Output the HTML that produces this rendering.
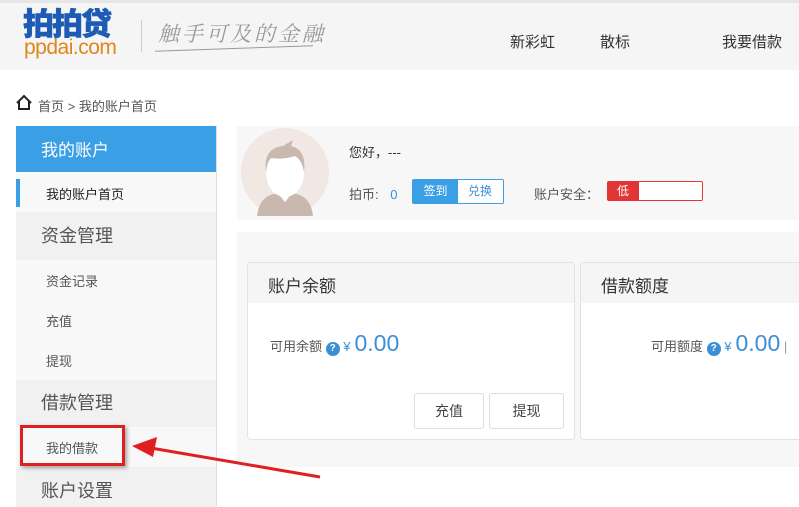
<!DOCTYPE html>
<html><head><meta charset="utf-8"><style>
*{margin:0;padding:0;box-sizing:border-box}
body{width:799px;height:506px;overflow:hidden;background:#fff;font-family:"Liberation Sans","Noto Sans CJK SC",sans-serif;position:relative;color:#333}
.a{position:absolute}
</style></head><body>
<div class="a" style="left:0;top:0;width:799px;height:70px;background:#f5f5f5;border-top:3px solid #e6e6e6"></div>
<div class="a" style="left:23px;top:9px;font-size:31px;font-weight:900;color:#1d5bb5;letter-spacing:-2px;line-height:32px;-webkit-text-stroke:0.5px #1d5bb5">拍拍贷</div>
<div class="a" style="left:24px;top:37px;font-size:21px;color:#e0861a;line-height:22px;letter-spacing:-0.5px">ppdai.com</div>
<div class="a" style="left:141px;top:20px;width:1px;height:32px;background:#ccc"></div>
<div class="a" style="left:158px;top:18px;font-size:21px;color:#999;font-style:italic;letter-spacing:3px;font-family:'Noto Serif CJK SC',serif">触手可及的金融</div>
<div class="a" style="left:155px;top:48px;width:158px;height:1px;background:#999;transform:rotate(-2deg)"></div>
<div class="a" style="left:510px;top:31px;font-size:15px;color:#333">新彩虹</div>
<div class="a" style="left:600px;top:31px;font-size:15px;color:#333">散标</div>
<div class="a" style="left:722px;top:31px;font-size:15px;color:#333">我要借款</div>
<svg class="a" style="left:15px;top:94px" width="18" height="17" viewBox="0 0 18 17"><path d="M2 9 L9 2 L16 9 M4 7 V15 H14 V7" fill="none" stroke="#222" stroke-width="2"/></svg>
<div class="a" style="left:38px;top:96px;font-size:13px;color:#555">首页 &gt; 我的账户首页</div>
<!-- sidebar -->
<div class="a" style="left:16px;top:126px;width:201px;height:380px;border-right:1px solid #ddd;background:#f8f8f8"></div>
<div class="a" style="left:16px;top:126px;width:200px;height:46px;background:#3b9fe6;color:#fff;font-size:17px;padding:10px 0 0 25px">我的账户</div>
<div class="a" style="left:16px;top:179px;width:4px;height:28px;background:#3b9fe6"></div>
<div class="a" style="left:46px;top:184px;font-size:13px;color:#222">我的账户首页</div>
<div class="a" style="left:16px;top:212px;width:200px;height:48px;background:#f1f1f1;font-size:18px;color:#555;padding:10px 0 0 25px">资金管理</div>
<div class="a" style="left:46px;top:271px;font-size:13px;color:#555">资金记录</div>
<div class="a" style="left:46px;top:311px;font-size:13px;color:#555">充值</div>
<div class="a" style="left:46px;top:351px;font-size:13px;color:#555">提现</div>
<div class="a" style="left:16px;top:380px;width:200px;height:47px;background:#f1f1f1;font-size:18px;color:#555;padding:9px 0 0 25px">借款管理</div>
<div class="a" style="left:46px;top:438px;font-size:13px;color:#555">我的借款</div>
<div class="a" style="left:16px;top:467px;width:200px;height:40px;background:#f1f1f1;font-size:18px;color:#555;padding:10px 0 0 25px">账户设置</div>
<!-- profile -->
<div class="a" style="left:237px;top:126px;width:562px;height:94px;background:#f7f7f7"></div>
<svg class="a" style="left:239px;top:126px" width="92" height="92"><circle cx="46" cy="46" r="44" fill="#f1e8e4"/><path d="M18 90 Q20 72 34 68 L58 68 Q72 72 74 90Z" fill="#c8b8ae"/><path d="M38 66 L46 76 L54 66Z" fill="#fff"/><ellipse cx="46" cy="47" rx="19" ry="24" fill="#fff"/><path d="M27 46 Q24 22 44 20 L54 14 L52 20 Q68 24 65 46 Q63 34 56 30 Q44 34 32 32 Q28 36 27 46Z" fill="#c8b8ae"/></svg>
<div class="a" style="left:349px;top:142px;font-size:13px;color:#333">您好，---</div>
<div class="a" style="left:349px;top:184px;font-size:13px;color:#555">拍币: <span style="color:#3b8fd6;margin-left:8px">0</span></div>
<div class="a" style="left:412px;top:179px;width:92px;height:25px;border:1px solid #3b9fe6;border-radius:2px;font-size:12px;line-height:23px;background:#fff"><span style="display:inline-block;width:45px;background:#3b9fe6;color:#fff;text-align:center">签到</span><span style="display:inline-block;width:44px;color:#3b8fd6;text-align:center">兑换</span></div>
<div class="a" style="left:534px;top:184px;font-size:13px;color:#555">账户安全：</div>
<div class="a" style="left:607px;top:181px;width:96px;height:20px;border:1px solid #e23535;border-radius:2px;background:#fff"><div style="width:31px;height:18px;background:#e23535;color:#fff;font-size:12px;line-height:18px;padding-left:9px">低</div></div>
<!-- main -->
<div class="a" style="left:237px;top:232px;width:562px;height:235px;background:#f7f7f7"></div>
<div class="a" style="left:247px;top:262px;width:328px;height:178px;background:#fff;border:1px solid #e2e2e2;border-radius:4px;overflow:hidden">
 <div style="height:40px;background:#f5f5f5;font-size:17px;padding:9px 0 0 20px;color:#333">账户余额</div>
 <div style="position:absolute;left:22px;top:67px;font-size:13px;color:#555">可用余额 <span style="display:inline-block;width:14px;height:14px;border-radius:7px;background:#3b8fd6;color:#fff;font-size:10px;text-align:center;line-height:14px;font-weight:bold">?</span> <span style="color:#3b8fd6">¥</span><span style="color:#3b8fd6;font-size:23px;margin-left:4px">0.00</span></div>
 <div style="position:absolute;left:166px;top:130px;width:70px;height:36px;border:1px solid #ddd;border-radius:3px;font-size:14px;text-align:center;line-height:34px;color:#444">充值</div>
 <div style="position:absolute;left:241px;top:130px;width:75px;height:36px;border:1px solid #ddd;border-radius:3px;font-size:14px;text-align:center;line-height:34px;color:#444">提现</div>
</div>
<div class="a" style="left:580px;top:262px;width:230px;height:178px;background:#fff;border:1px solid #e2e2e2;border-radius:4px;overflow:hidden">
 <div style="height:40px;background:#f5f5f5;font-size:17px;padding:9px 0 0 20px;color:#333">借款额度</div>
 <div style="position:absolute;left:70px;top:67px;font-size:13px;color:#555;white-space:nowrap">可用额度 <span style="display:inline-block;width:14px;height:14px;border-radius:7px;background:#3b8fd6;color:#fff;font-size:10px;text-align:center;line-height:14px;font-weight:bold">?</span> <span style="color:#3b8fd6">¥</span><span style="color:#3b8fd6;font-size:23px;margin-left:4px">0.00</span> <span style="color:#999">|</span></div>
</div>
<div class="a" style="left:20px;top:425px;width:105px;height:41px;border:3px solid #e02020;box-shadow:2px 2px 4px rgba(0,0,0,.35)"></div>
<svg class="a" style="left:125px;top:430px" width="200" height="60"><line x1="195" y1="47" x2="20" y2="17" stroke="#e02020" stroke-width="3"/><polygon points="7,16 32,7 28,27" fill="#e02020"/></svg>
</body></html>
